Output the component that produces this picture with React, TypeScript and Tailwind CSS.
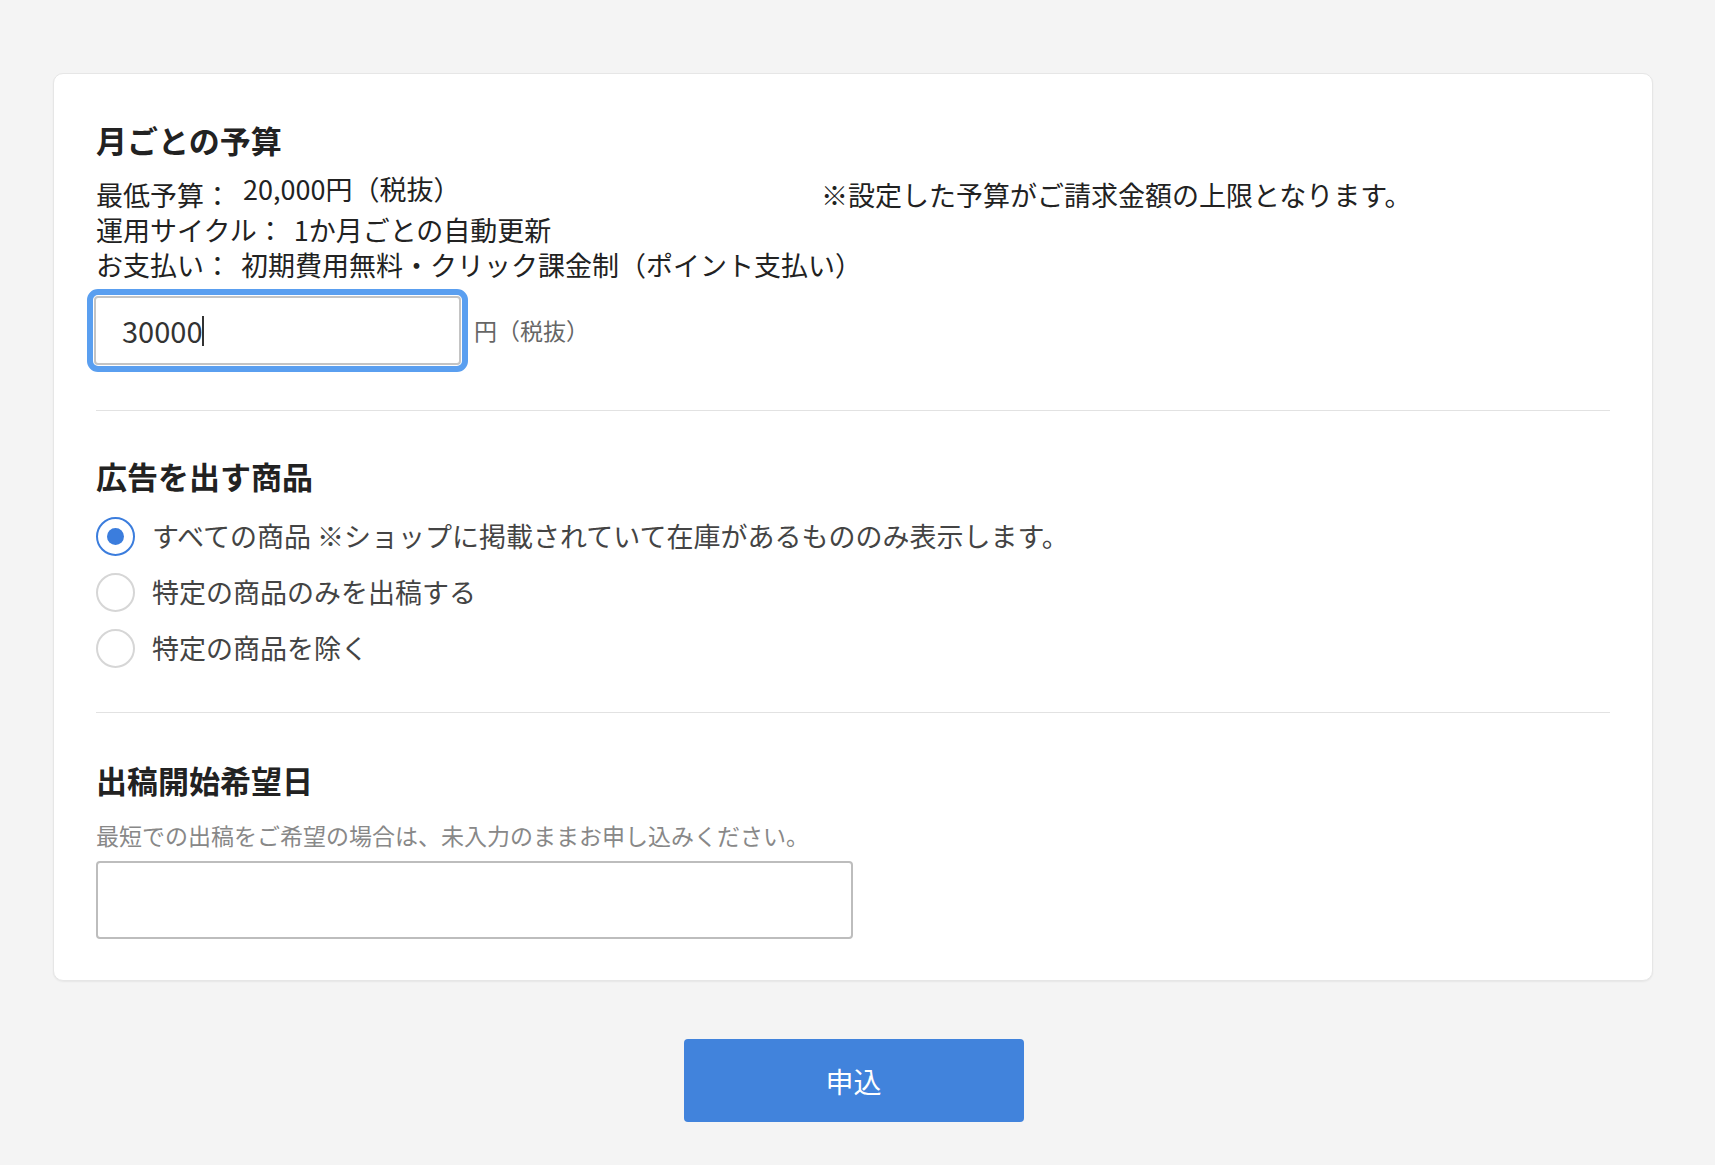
import React from "react";

const font = { fontFamily: '"Noto Sans CJK JP", "Noto Sans", sans-serif' };

function Radio({ checked, label }: { checked?: boolean; label: string }) {
  return (
    <div className="flex items-center h-[56px]">
      <div className={`w-[39px] h-[39px] rounded-full border-2 flex items-center justify-center bg-white ${checked ? "border-[#3b7ddd]" : "border-[#d6d6d6]"}`}>
        {checked && <div className="w-[17px] h-[17px] rounded-full bg-[#3b7ddd]" />}
      </div>
      <span className="ml-[17px] text-[27px] text-[#444]">{label}</span>
    </div>
  );
}

export default function App() {
  return (
    <div style={font} className="min-h-[1165px] w-[1715px] bg-[#f4f4f4] pt-[73px]">
      <div className="ml-[53px] w-[1600px] h-[908px] bg-white rounded-[10px] border border-[#e6e6e6] px-[42px] pt-[44px] shadow-[0_1px_2px_rgba(0,0,0,0.06)]">
        <h2 className="text-[31px] font-bold text-[#222] leading-[44px]">月ごとの予算</h2>
        <div className="mt-[15px] text-[27px] text-[#222] leading-[35px] flex">
          <div className="w-[725px] shrink-0">
            <div>最低予算：<span className="ml-[12px] relative -top-[6px]">20,000円（税抜）</span></div>
            <div>運用サイクル：<span className="ml-[10px]">1か月ごとの自動更新</span></div>
            <div className="whitespace-nowrap">お支払い：<span className="ml-[10px]">初期費用無料・クリック課金制（ポイント支払い）</span></div>
          </div>
          <div className="whitespace-nowrap">※設定した予算がご請求金額の上限となります。</div>
        </div>
        <div className="flex items-center mt-[7px] -ml-[9px]">
          <div className="rounded-[11px] border-[6px] border-[#5a9ff0] p-[1px]">
            <div className="w-[367px] h-[69px] border-2 border-[#c4c4c4] rounded-[4px] flex items-center px-[26px] text-[29px] text-[#333]">
              30000<span className="w-[1.5px] h-[30px] bg-[#333]" />
            </div>
          </div>
          <span className="ml-[6px] text-[23px] text-[#666]">円（税抜）</span>
        </div>
        <div className="mt-[38px] h-px bg-[#e2e2e2]" />
        <h2 className="mt-[43px] text-[31px] font-bold text-[#222] leading-[44px]">広告を出す商品</h2>
        <div className="mt-[10px]">
          <Radio checked label="すべての商品 ※ショップに掲載されていて在庫があるもののみ表示します。" />
          <Radio label="特定の商品のみを出稿する" />
          <Radio label="特定の商品を除く" />
        </div>
        <div className="mt-[36px] h-px bg-[#e2e2e2]" />
        <h2 className="mt-[45px] text-[31px] font-bold text-[#222] leading-[44px]">出稿開始希望日</h2>
        <p className="mt-[17px] text-[23px] text-[#888] leading-[32px]">最短での出稿をご希望の場合は、未入力のままお申し込みください。</p>
        <div className="mt-[10px] w-[757px] h-[78px] border-2 border-[#bdbdbd] rounded-[4px] bg-white" />
      </div>
      <div className="flex justify-center mt-[58px] pr-[8px]">
        <button className="w-[340px] h-[83px] rounded-[4px] bg-[#4183dc] text-white text-[28px]">申込</button>
      </div>
    </div>
  );
}
